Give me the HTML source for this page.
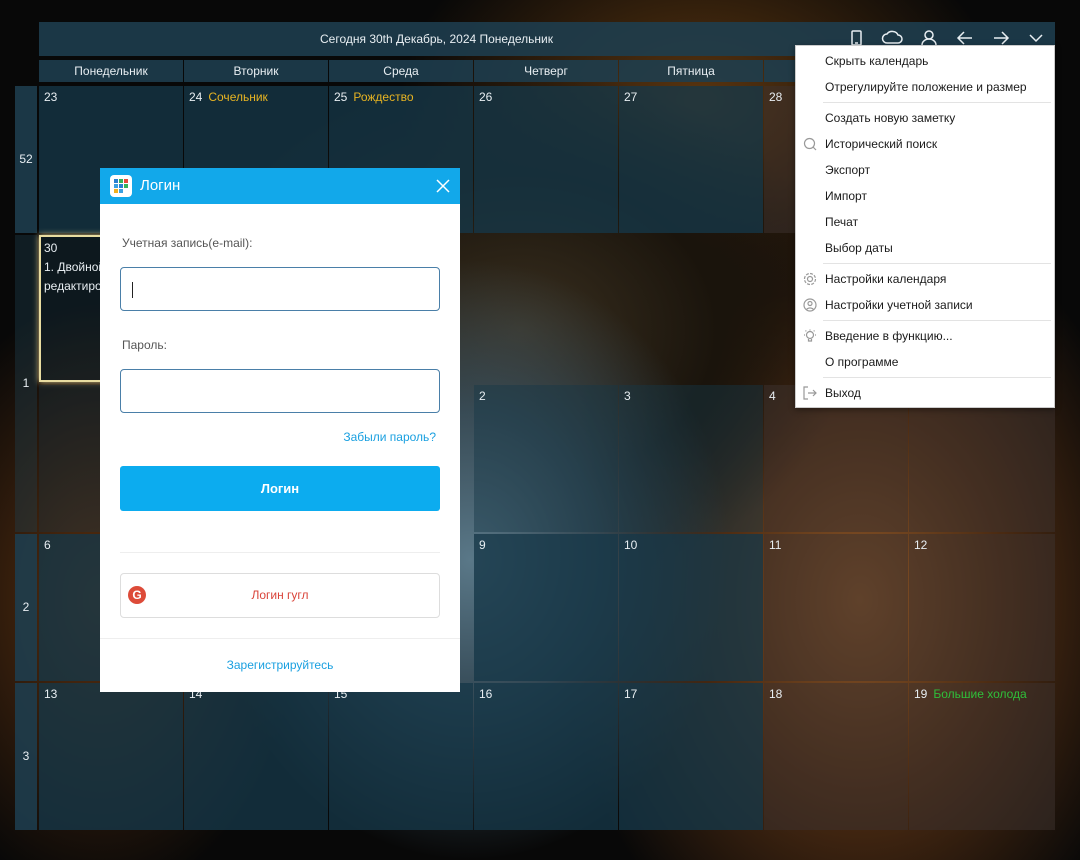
<!DOCTYPE html>
<html><head><meta charset="utf-8"><style>
*{box-sizing:border-box;margin:0;padding:0}
body{width:1080px;height:860px;overflow:hidden;position:relative;font-family:"Liberation Sans","DejaVu Sans",sans-serif;font-size:12px;color:#e8eef2;
background:
radial-gradient(ellipse 260px 300px at 470px 560px,#5a7888 0%,rgba(60,85,100,.8) 50%,rgba(0,0,0,0) 100%),
radial-gradient(ellipse 330px 260px at 520px 330px,#3a3020 0%,#1a140c 60%,rgba(0,0,0,0) 100%),
radial-gradient(ellipse 300px 400px at 860px 600px,#8a5528 0%,#4a2a12 50%,rgba(0,0,0,0) 100%),
radial-gradient(ellipse 200px 300px at 100px 600px,#5a3010 0%,rgba(0,0,0,0) 100%),
radial-gradient(ellipse 300px 200px at 700px 100px,#5a3510 0%,rgba(0,0,0,0) 100%),
#080808}
.a{position:absolute}
.bar{background:rgba(30,62,78,.88)}
.cell{position:absolute;background:rgba(22,55,72,.78);width:144px;height:147px;padding:4px 5px;font-size:12px;color:#e8eef2}
.cell.t{background:rgba(22,55,72,.35)}
.cell.w{background:rgba(60,50,45,.55)}
.hol{color:#e8b422;margin-left:6px}
.dh{position:absolute;top:60px;height:22px;width:144px;text-align:center;line-height:22px;font-size:12px}
.wk{position:absolute;left:15px;width:22px;font-size:12px;text-align:center}
.menu{position:absolute;left:795px;top:45px;width:260px;height:363px;background:#fff;border:1px solid #ccc;color:#1a1a1a;font-size:12px;box-shadow:0 2px 6px rgba(0,0,0,.4)}
.mi{position:absolute;left:29px}
.sep{position:absolute;left:27px;right:3px;height:1px;background:#e3e3e3}
.ic{position:absolute;left:7px}
.dlg{position:absolute;left:100px;top:168px;width:360px;height:524px;background:#fff;color:#555}
.inp{position:absolute;left:20px;width:320px;height:44px;border:1px solid #4a7fa8;border-radius:4px;background:#fff}
</style></head><body>
<div class="a bar" style="left:39px;top:22px;width:1016px;height:34px;line-height:34px;font-size:12px;padding-left:281px">Сегодня 30th Декабрь, 2024 Понедельник</div>
<svg class="a" style="left:840px;top:28px" width="220" height="22" fill="none" stroke="#e8eef2" stroke-width="1.5">
<rect x="12" y="3" width="9" height="14" rx="1"/><line x1="15" y1="15" x2="18" y2="15"/>
<path d="M47 15 H58 a4 4 0 0 0 0-8 a6 5 0 0 0-11-1 a4 4 0 0 0 0 9z"/>
<circle cx="89" cy="7" r="4"/><path d="M82 17 a7 6 0 0 1 14 0"/>
<path d="M132 10 H118 M124 4 L118 10 L124 16"/>
<path d="M154 10 H168 M162 4 L168 10 L162 16"/>
<path d="M190 7 L196 13 L202 7"/>
</svg>
<div class="dh bar" style="left:39px">Понедельник</div>
<div class="dh bar" style="left:184px">Вторник</div>
<div class="dh bar" style="left:329px">Среда</div>
<div class="dh bar" style="left:474px">Четверг</div>
<div class="dh bar" style="left:619px">Пятница</div>
<div class="dh bar" style="left:764px">Суббота</div>
<div class="dh bar" style="left:909px;width:146px">Воскресенье</div>
<div class="wk bar" style="top:86px;height:147px;line-height:147px">52</div>
<div class="wk bar" style="top:235px;height:297px;line-height:297px;background:rgba(30,62,78,.4)">1</div>
<div class="wk bar" style="top:534px;height:147px;line-height:147px">2</div>
<div class="wk bar" style="top:683px;height:147px;line-height:147px">3</div>
<div class="cell" style="left:39px;top:86px">23</div>
<div class="cell" style="left:184px;top:86px">24<span class="hol">Сочельник</span></div>
<div class="cell" style="left:329px;top:86px">25<span class="hol">Рождество</span></div>
<div class="cell" style="left:474px;top:86px">26</div>
<div class="cell" style="left:619px;top:86px">27</div>
<div class="cell w" style="left:764px;top:86px">28</div>
<div class="cell w" style="left:909px;top:86px;width:146px">29</div>
<div class="cell t" style="left:39px;top:235px;border:2px solid #e8dca0;box-shadow:0 0 6px #d8c890;padding:2px 3px;line-height:19px">30<br>1. Двойной<br>редактиро</div>
<div class="cell t" style="left:39px;top:385px"></div>
<div class="cell" style="left:474px;top:385px;background:rgba(22,55,72,.45)">2</div>
<div class="cell" style="left:619px;top:385px;background:rgba(22,55,72,.45)">3</div>
<div class="cell w" style="left:764px;top:385px">4</div>
<div class="cell w" style="left:909px;top:385px;width:146px">5</div>
<div class="cell" style="left:39px;top:534px">6</div>
<div class="cell" style="left:474px;top:534px">9</div>
<div class="cell" style="left:619px;top:534px">10</div>
<div class="cell w" style="left:764px;top:534px">11</div>
<div class="cell w" style="left:909px;top:534px;width:146px">12</div>
<div class="cell" style="left:39px;top:683px">13</div>
<div class="cell" style="left:184px;top:683px">14</div>
<div class="cell" style="left:329px;top:683px">15</div>
<div class="cell" style="left:474px;top:683px">16</div>
<div class="cell" style="left:619px;top:683px">17</div>
<div class="cell w" style="left:764px;top:683px">18</div>
<div class="cell w" style="left:909px;top:683px;width:146px">19<span style="color:#2fbf3a;margin-left:6px">Большие холода</span></div>

<div class="menu">
<div class="mi" style="top:8px">Скрыть календарь</div>
<div class="mi" style="top:34px">Отрегулируйте положение и размер</div>
<div class="sep" style="top:56px"></div>
<div class="mi" style="top:65px">Создать новую заметку</div>
<svg class="ic" style="top:91px" width="14" height="14" fill="none" stroke="#999" stroke-width="1.2"><circle cx="6.5" cy="6.5" r="5"/><path d="M10 10 L13 13"/></svg>
<div class="mi" style="top:91px">Исторический поиск</div>
<div class="mi" style="top:117px">Экспорт</div>
<div class="mi" style="top:143px">Импорт</div>
<div class="mi" style="top:169px">Печат</div>
<div class="mi" style="top:195px">Выбор даты</div>
<div class="sep" style="top:217px"></div>
<svg class="ic" style="top:226px" width="14" height="14" fill="none" stroke="#999" stroke-width="1.2"><circle cx="7" cy="7" r="2.5"/><circle cx="7" cy="7" r="5.5" stroke-dasharray="3 1.3"/></svg>
<div class="mi" style="top:226px">Настройки календаря</div>
<svg class="ic" style="top:252px" width="14" height="14" fill="none" stroke="#999" stroke-width="1.2"><circle cx="7" cy="7" r="6"/><circle cx="7" cy="5.5" r="2"/><path d="M3.5 11.5 a4 3 0 0 1 7 0"/></svg>
<div class="mi" style="top:252px">Настройки учетной записи</div>
<div class="sep" style="top:274px"></div>
<svg class="ic" style="top:283px" width="14" height="14" fill="none" stroke="#999" stroke-width="1.2"><circle cx="7" cy="6" r="3.5"/><path d="M5.5 10 V12 H8.5 V10 M7 0.5V1.5 M1 6H2 M12 6H13 M2.5 1.5L3.3 2.3 M11.5 1.5L10.7 2.3"/></svg>
<div class="mi" style="top:283px">Введение в функцию...</div>
<div class="mi" style="top:309px">О программе</div>
<div class="sep" style="top:331px"></div>
<svg class="ic" style="top:340px" width="14" height="14" fill="none" stroke="#999" stroke-width="1.2"><path d="M5 1H1V13H5 M5 7H13 M10 4L13 7L10 10"/></svg>
<div class="mi" style="top:340px">Выход</div>
</div>

<div class="dlg">
<div class="a" style="left:0;top:0;width:360px;height:36px;background:#12a8ea"></div>
<div class="a" style="left:10px;top:7px;width:22px;height:22px;background:#fff;border-radius:4px"></div>
<svg class="a" style="left:14px;top:11px" width="14" height="14"><rect x="0" y="0" width="4" height="4" fill="#2a7fd0"/><rect x="5" y="0" width="4" height="4" fill="#34b35a"/><rect x="10" y="0" width="4" height="4" fill="#e84a3a"/><rect x="0" y="5" width="4" height="4" fill="#3aa0e0"/><rect x="5" y="5" width="4" height="4" fill="#2a7fd0"/><rect x="10" y="5" width="4" height="4" fill="#34b35a"/><rect x="0" y="10" width="4" height="4" fill="#f0b020"/><rect x="5" y="10" width="4" height="4" fill="#3aa0e0"/></svg>
<div class="a" style="left:40px;top:9px;font-size:15px;color:#fff">Логин</div>
<svg class="a" style="left:336px;top:11px" width="14" height="14" stroke="#fff" stroke-width="1.5"><path d="M1 1L13 13M13 1L1 13"/></svg>
<div class="a" style="left:22px;top:68px;font-size:12px;color:#555">Учетная запись(e-mail):</div>
<div class="inp" style="top:99px"><div class="a" style="left:11px;top:14px;width:1px;height:16px;background:#222"></div></div>
<div class="a" style="left:22px;top:170px;color:#555">Пароль:</div>
<div class="inp" style="top:201px"></div>
<div class="a" style="right:24px;top:262px;color:#1aa0e0">Забыли пароль?</div>
<div class="a" style="left:20px;top:298px;width:320px;height:45px;background:#0cacef;border-radius:3px;color:#fff;font-weight:bold;text-align:center;line-height:45px;font-size:13px">Логин</div>
<div class="a" style="left:20px;top:384px;width:320px;height:1px;background:#eee"></div>
<div class="a" style="left:20px;top:405px;width:320px;height:45px;border:1px solid #ddd;border-radius:4px;text-align:center;line-height:43px;color:#d9443a">Логин гугл</div>
<div class="a" style="left:28px;top:418px;width:18px;height:18px;border-radius:50%;background:#dd4b39;color:#fff;font-weight:bold;font-size:12px;text-align:center;line-height:18px">G</div>
<div class="a" style="left:0;top:470px;width:360px;height:1px;background:#eee"></div>
<div class="a" style="left:0;top:490px;width:360px;text-align:center;color:#1aa0e0">Зарегистрируйтесь</div>
</div>
</body></html>
